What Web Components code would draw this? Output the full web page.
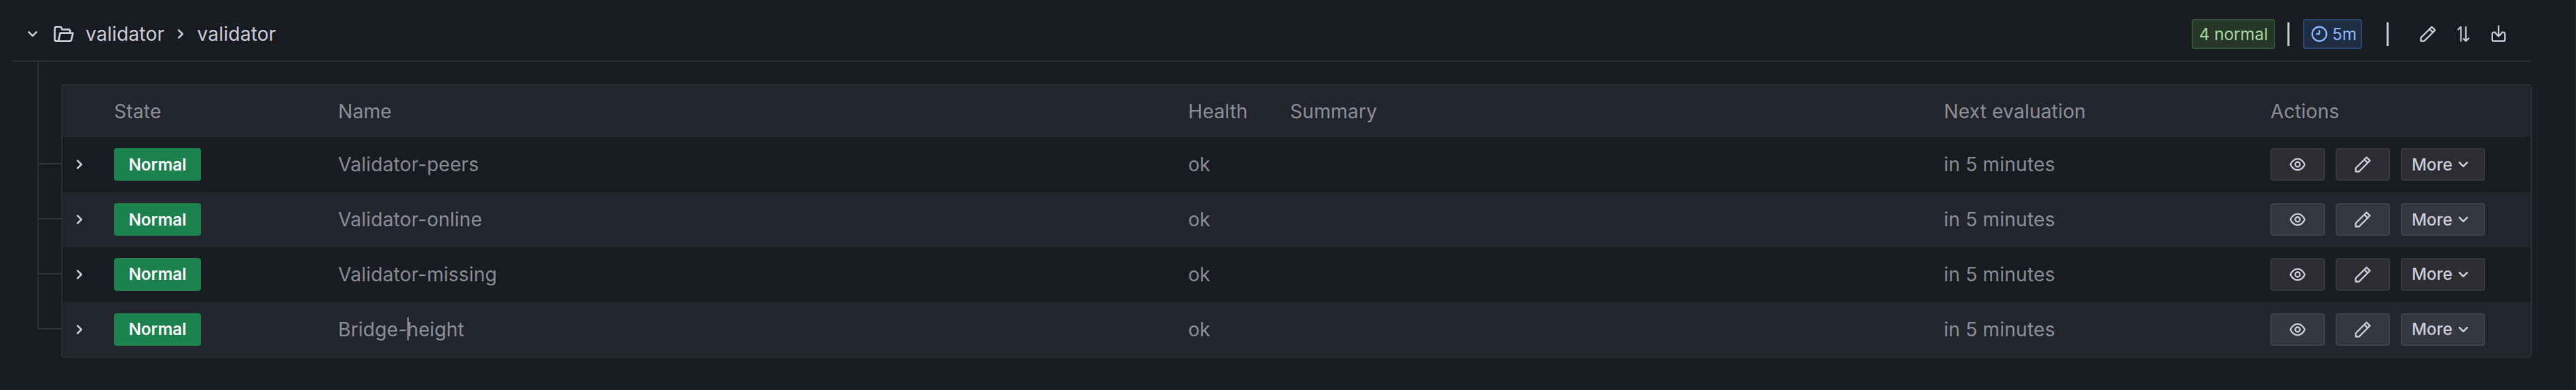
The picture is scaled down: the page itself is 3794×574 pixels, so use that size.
<!DOCTYPE html>
<html>
<head>
<meta charset="utf-8">
<style>
  html, body { margin: 0; background: #181b1f; }
  body { font-family: Inter, "Noto Sans", sans-serif; color: #ccccdc; width: 3794px; height: 574px; overflow: hidden; box-shadow: inset -1px 0 0 #2a2d32; }
</style>
</head>
<body>
<rule-group name="validator" count="4 normal" every="5m">
  <alert-row name="Validator-peers"></alert-row>
  <alert-row name="Validator-online" alt></alert-row>
  <alert-row name="Validator-missing"></alert-row>
  <alert-row name="Bridge-height" alt caret></alert-row>
</rule-group>

<script>
const ICONS = {
  folder: '<path d="M22.78,10.37A1,1,0,0,0,22,10H20V9a3,3,0,0,0-3-3H10.72l-.32-1A3,3,0,0,0,7.56,3H4A3,3,0,0,0,1,6V18a3,3,0,0,0,3,3H18.4a3,3,0,0,0,2.92-2.35L23,11.22A1,1,0,0,0,22.78,10.37ZM5.37,18.22a1,1,0,0,1-1,.78H4a1,1,0,0,1-1-1V6A1,1,0,0,1,4,5H7.56a1,1,0,0,1,1,.68l.54,1.64A1,1,0,0,0,10,8h7a1,1,0,0,1,1,1v1H8a1,1,0,0,0-1,.78Zm14,0a1,1,0,0,1-1,.78H7.21a1.42,1.42,0,0,0,.11-.35L8.8,12h12Z"/>',
  pen: '<path d="M22,7.24a1,1,0,0,0-.29-.71L17.47,2.29A1,1,0,0,0,16.76,2a1,1,0,0,0-.71.29L13.22,5.12h0L2.29,16.05a1,1,0,0,0-.29.71V21a1,1,0,0,0,1,1H7.24A1,1,0,0,0,8,21.71L18.87,10.78h0L21.71,8a1.19,1.19,0,0,0,.22-.33,1,1,0,0,0,0-.24.7.7,0,0,0,0-.14ZM6.83,20H4V17.17l9.93-9.93,2.83,2.83ZM18.17,8.66,15.34,5.83l1.42-1.41,2.82,2.82Z"/>',
  eye: '<path d="M21.92,11.6C19.9,6.91,16.1,4,12,4S4.1,6.91,2.08,11.6a1,1,0,0,0,0,.8C4.1,17.09,7.9,20,12,20s7.9-2.91,9.92-7.6A1,1,0,0,0,21.92,11.6ZM12,18c-3.17,0-6.17-2.29-7.9-6C5.83,8.29,8.83,6,12,6s6.17,2.29,7.9,6C18.17,15.71,15.17,18,12,18ZM12,8a4,4,0,1,0,4,4A4,4,0,0,0,12,8Zm0,6a2,2,0,1,1,2-2A2,2,0,0,1,12,14Z"/>',
  clock: '<path d="M12 2a10 10 0 1 0 10 10A10 10 0 0 0 12 2Zm0 18a8 8 0 1 1 8-8 8 8 0 0 1-8 8Zm1-8V7h-2v4H8v2h4a1 1 0 0 0 1-1Z"/>',
  sort: '<g fill="none" stroke="currentColor" stroke-width="1.9" stroke-linecap="round" stroke-linejoin="round"><path d="M9 21V3L5.5 6.5"/><path d="M15.2 3V21M12.4 18.2 15.2 21l3.5-3.5"/></g>',
  save: '<g fill="none" stroke="currentColor" stroke-width="2" stroke-linecap="round" stroke-linejoin="round"><path d="M8 10H6a2 2 0 0 0-2 2v7a2 2 0 0 0 2 2h12a2 2 0 0 0 2-2v-7a2 2 0 0 0-2-2h-2"/><path d="M12 2v13M8.5 11.5 12 15l3.5-3.5"/></g>',
  down: '<path d="M17,9.17a1,1,0,0,0-1.41,0L12,12.71,8.46,9.17a1,1,0,0,0-1.41,0,1,1,0,0,0,0,1.42l4.24,4.24a1,1,0,0,0,1.42,0L17,10.59A1,1,0,0,0,17,9.17Z"/>',
  right: '<path d="M14.83,11.29,10.59,7.05a1,1,0,0,0-1.42,0,1,1,0,0,0,0,1.41L12.71,12,9.17,15.54a1,1,0,0,0,0,1.41,1,1,0,0,0,.71.29,1,1,0,0,0,.71-.29l4.24-4.24A1,1,0,0,0,14.83,11.29Z"/>'
};
const svg = (name, size) => `<svg width="${size}" height="${size}" viewBox="0 0 24 24" fill="currentColor">${ICONS[name]}</svg>`;

const COLUMNS = '76px 330px 1252px 150px 963px 481px 1fr';

class RuleGroup extends HTMLElement {
  constructor() {
    super();
    this.attachShadow({ mode: 'open' });
    const name = this.getAttribute('name');
    this.shadowRoot.innerHTML = `
      <style>
        :host { display: block; padding-left: 18px; width: 3711px; }
        .bar { display: flex; align-items: center; height: 76px; border-bottom: 2px solid #2b2e33; padding: 12px 0 1px 14px; }
        .bar svg { display: block; flex: none; }
        .chev { margin-right: 14px; }
        .folder { margin-right: 16px; }
        .title { font-size: 28.28px; letter-spacing: .005em; line-height: 40px; color: #ccccdc; }
        .sep { margin: 0 8px; color: #ccccdc; display: flex; }
        .spacer { flex: 1; }
        .tag { box-sizing: border-box; height: 44px; border-radius: 4px; font-size: 24.24px; display: flex; align-items: center; }
        .ok { width: 123px; justify-content: center; background: #26372a; border: 2px solid #35523a; color: #a5d79f; }
        .time { width: 87px; gap: 5px; padding-left: 8px; background: #1f2d43; border: 2px solid #2a4672; color: #8ab8ff; }
        .bar-line { width: 3px; height: 35px; background: #ccccdc; flex: none; }
        .icons { display: flex; align-items: center; gap: 24px; margin-left: 44px; margin-right: 35px; }
        .body { display: flex; padding-left: 37px; padding-top: 33px; }
        .wrap { flex: 1; min-width: 0; border: 2px solid #2b2e33; border-radius: 4px; }
        .head { display: grid; grid-template-columns: ${COLUMNS}; height: 76px; align-items: center; background: #22252b; font-size: 28.28px; letter-spacing: .005em; color: rgba(204,204,220,.65); }
        .lines { width: 35px; flex: none; height: 394px; margin-top: -33px; border-left: 2px solid #2b2e33; display: flex; flex-direction: column; box-sizing: border-box; }
        .lines i { display: block; height: 2px; background: #333639; }
      </style>
      <div class="bar">
        <span class="chev">${svg('down', 32)}</span>
        <span class="folder">${svg('folder', 32)}</span>
        <span class="title">${name}</span>
        <span class="sep">${svg('right', 32)}</span>
        <span class="title">${name}</span>
        <span class="spacer"></span>
        <span class="tag ok">${this.getAttribute('count')}</span>
        <span class="bar-line" style="margin:0 20px 0 18px"></span>
        <span class="tag time">${svg('clock', 28)}${this.getAttribute('every')}</span>
        <span class="bar-line" style="margin-left:36px"></span>
        <span class="icons">${svg('pen', 28)}${svg('sort', 28)}${svg('save', 28)}</span>
      </div>
      <div class="body">
        <div class="lines">
          <i style="margin-top:149px"></i><i style="margin-top:79px"></i><i style="margin-top:79px"></i><i style="margin-top:79px"></i>
        </div>
        <div class="wrap">
          <div class="head">
            <span></span><span>State</span><span>Name</span><span>Health</span><span>Summary</span><span>Next evaluation</span><span>Actions</span>
          </div>
          <slot></slot>
        </div>
      </div>`;
  }
}

class StateBadge extends HTMLElement {
  constructor() {
    super();
    this.attachShadow({ mode: 'open' });
    this.shadowRoot.innerHTML = `
      <style>
        :host { display: inline-flex; box-sizing: border-box; width: 128px; height: 48px; vertical-align: top; align-items: center; justify-content: center; background: #1b814d; border-radius: 4px; color: #fff; font-size: 24.24px; font-weight: 600; }
      </style><slot></slot>`;
  }
}

class ActionButton extends HTMLElement {
  constructor() {
    super();
    this.attachShadow({ mode: 'open' });
    this.shadowRoot.innerHTML = `
      <style>
        :host { display: inline-flex; box-sizing: border-box; height: 48px; min-width: 80px; align-items: center; justify-content: center; padding: 0 14px; background: var(--btn-bg); border: 2px solid var(--btn-border); border-radius: 4px; color: #ccccdc; font-size: 24.24px; font-weight: 500; }
      </style><slot></slot>`;
  }
}

class AlertRow extends HTMLElement {
  constructor() {
    super();
    this.attachShadow({ mode: 'open' });
    const caret = this.hasAttribute('caret') ? '<b class="caret"></b>' : '';
    this.shadowRoot.innerHTML = `
      <style>
        :host { display: block; --btn-bg: #2b2d31; --btn-border: #36383d; background: #181b1f; }
        :host([alt]) { --btn-bg: #34373f; --btn-border: #3f424a; background: #22252b; }
        .row { display: grid; grid-template-columns: ${COLUMNS}; height: 80.8px; align-items: center; font-size: 28.28px; letter-spacing: .005em; color: rgba(204,204,220,.65); }
        .exp { display: flex; padding-left: 9px; color: #ccccdc; }
        .exp svg, action-button svg { display: block; }
        .cell { display: flex; letter-spacing: 0; }
        .name { position: relative; }
        .caret { position: absolute; left: 102px; top: -1px; width: 2px; height: 34px; background: #8f8f9f; }
        .acts { display: flex; gap: 16px; letter-spacing: 0; }
      </style>
      <div class="row">
        <span class="exp">${svg('right', 32)}</span>
        <span class="cell"><state-badge>Normal</state-badge></span>
        <span class="name">${this.getAttribute('name')}${caret}</span>
        <span>ok</span>
        <span></span>
        <span>in 5 minutes</span>
        <span class="acts">
          <action-button>${svg('eye', 28)}</action-button>
          <action-button>${svg('pen', 28)}</action-button>
          <action-button>More${svg('down', 32)}</action-button>
        </span>
      </div>`;
  }
}

customElements.define('state-badge', StateBadge);
customElements.define('action-button', ActionButton);
customElements.define('alert-row', AlertRow);
customElements.define('rule-group', RuleGroup);
</script>
</body>
</html>
